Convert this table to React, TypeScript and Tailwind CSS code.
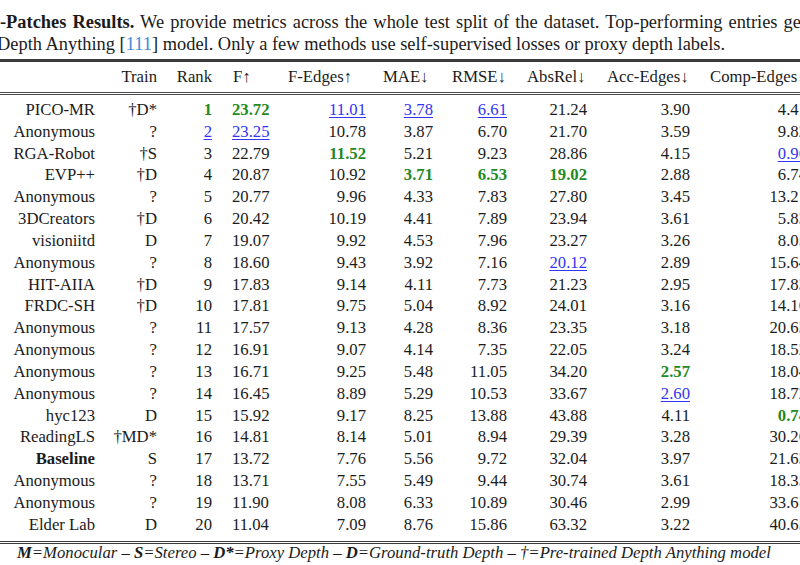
import React from 'react';

type Mark = 'g' | 'b' | undefined;
type Cell = string | [string, Mark];

// column layout: width, header alignment, value alignment
const cols = [
  { w: 'w-[105px]', head: 'text-right pr-[10px]', cell: 'text-right pr-[10px]' },
  { w: 'w-[57px]', head: 'text-right pr-[5px]', cell: 'text-right pr-[5px]' },
  { w: 'w-[58px]', head: 'text-right pr-[8px]', cell: 'text-right pr-[8px]' },
  { w: 'w-[55px]', head: 'text-left pl-[13px]', cell: 'text-left pl-[12px]' },
  { w: 'w-[100px]', head: 'text-left pl-[13px]', cell: 'text-right pr-[9px]' },
  { w: 'w-[65px]', head: 'text-left pl-[8px]', cell: 'text-right pr-[7px]' },
  { w: 'w-[75px]', head: 'text-left pl-[12px]', cell: 'text-right pr-[8px]' },
  { w: 'w-[85px]', head: 'text-left pl-[12px]', cell: 'text-right pr-[13px]' },
  { w: 'w-[100px]', head: 'text-left pl-[7px]', cell: 'text-right pr-[10px]' },
  { w: 'w-[120px]', head: 'text-left pl-[10px]', cell: 'text-right pr-[13px]' },
];

const headers = ['', 'Train', 'Rank', 'F↑', 'F-Edges↑', 'MAE↓', 'RMSE↓', 'AbsRel↓', 'Acc-Edges↓', 'Comp-Edges↓'];

const rows: Cell[][] = [
  ['PICO-MR', '†D*', ['1', 'g'], ['23.72', 'g'], ['11.01', 'b'], ['3.78', 'b'], ['6.61', 'b'], '21.24', '3.90', '4.41'],
  ['Anonymous', '?', ['2', 'b'], ['23.25', 'b'], '10.78', '3.87', '6.70', '21.70', '3.59', '9.82'],
  ['RGA-Robot', '†S', '3', '22.79', ['11.52', 'g'], '5.21', '9.23', '28.86', '4.15', ['0.96', 'b']],
  ['EVP++', '†D', '4', '20.87', '10.92', ['3.71', 'g'], ['6.53', 'g'], ['19.02', 'g'], '2.88', '6.74'],
  ['Anonymous', '?', '5', '20.77', '9.96', '4.33', '7.83', '27.80', '3.45', '13.21'],
  ['3DCreators', '†D', '6', '20.42', '10.19', '4.41', '7.89', '23.94', '3.61', '5.83'],
  ['visioniitd', 'D', '7', '19.07', '9.92', '4.53', '7.96', '23.27', '3.26', '8.05'],
  ['Anonymous', '?', '8', '18.60', '9.43', '3.92', '7.16', ['20.12', 'b'], '2.89', '15.64'],
  ['HIT-AIIA', '†D', '9', '17.83', '9.14', '4.11', '7.73', '21.23', '2.95', '17.83'],
  ['FRDC-SH', '†D', '10', '17.81', '9.75', '5.04', '8.92', '24.01', '3.16', '14.16'],
  ['Anonymous', '?', '11', '17.57', '9.13', '4.28', '8.36', '23.35', '3.18', '20.63'],
  ['Anonymous', '?', '12', '16.91', '9.07', '4.14', '7.35', '22.05', '3.24', '18.52'],
  ['Anonymous', '?', '13', '16.71', '9.25', '5.48', '11.05', '34.20', ['2.57', 'g'], '18.04'],
  ['Anonymous', '?', '14', '16.45', '8.89', '5.29', '10.53', '33.67', ['2.60', 'b'], '18.72'],
  ['hyc123', 'D', '15', '15.92', '9.17', '8.25', '13.88', '43.88', '4.11', ['0.74', 'g']],
  ['ReadingLS', '†MD*', '16', '14.81', '8.14', '5.01', '8.94', '29.39', '3.28', '30.26'],
  ['Baseline', 'S', '17', '13.72', '7.76', '5.56', '9.72', '32.04', '3.97', '21.63'],
  ['Anonymous', '?', '18', '13.71', '7.55', '5.49', '9.44', '30.74', '3.61', '18.35'],
  ['Anonymous', '?', '19', '11.90', '8.08', '6.33', '10.89', '30.46', '2.99', '33.61'],
  ['Elder Lab', 'D', '20', '11.04', '7.09', '8.76', '15.86', '63.32', '3.22', '40.65'],
];

function Value({ cell }: { cell: Cell }) {
  if (typeof cell === 'string') return <>{cell}</>;
  const [text, mark] = cell;
  if (mark === 'g') return <span className="font-bold text-[#1f8a24]">{text}</span>;
  return <span className="text-[#3434f2] underline underline-offset-2 decoration-1">{text}</span>;
}

export default function App() {
  return (
    <div className="w-[800px] h-[565px] overflow-hidden bg-white text-[#1b1b1b] font-['Liberation_Serif',serif] text-[16.7px]">
      <div className="pt-[11px] text-[18.4px] leading-[22px] whitespace-nowrap">
        <div className="[word-spacing:1.5px]">
          <span className="font-bold">-Patches Results.</span> We provide metrics across the whole test split of the
          dataset. Top-performing entries generally
        </div>
        <div className="-ml-[3px]">
          Depth Anything [<span className="text-[#3f8ad4]">111</span>] model. Only a few methods use self-supervised
          losses or proxy depth labels.
        </div>
      </div>

      <div className="mt-[4px] w-[820px]">
        <div className="h-[3px] border-t-2 border-b border-[#3a3a3a]" />
        <div className="flex h-[30px] items-center">
          {headers.map((h, i) => (
            <div key={i} className={`${cols[i].w} ${cols[i].head} shrink-0 whitespace-nowrap`}>
              {h}
            </div>
          ))}
        </div>
        <div className="h-[3px] border-y border-[#4a4a4a]" />

        <div className="pt-[4px] pb-[5px]">
          {rows.map((r, ri) => (
            <div key={ri} className="flex h-[21.84px] items-center leading-[21.84px]">
              {r.map((c, ci) => (
                <div
                  key={ci}
                  className={`${cols[ci].w} ${cols[ci].cell} shrink-0 whitespace-nowrap ${
                    ci === 0 && c === 'Baseline' ? 'font-bold' : ''
                  }`}
                >
                  <Value cell={c} />
                </div>
              ))}
            </div>
          ))}
        </div>

        <div className="h-[3px] border-y border-[#3a3a3a]" />
        <div className="pl-[17px] pt-[1px] italic text-[16.7px] leading-[16px] whitespace-nowrap">
          <b>M</b>=Monocular – <b>S</b>=Stereo – <b>D*</b>=Proxy Depth – <b>D</b>=Ground-truth Depth – †=Pre-trained
          Depth Anything model
        </div>
      </div>
    </div>
  );
}
